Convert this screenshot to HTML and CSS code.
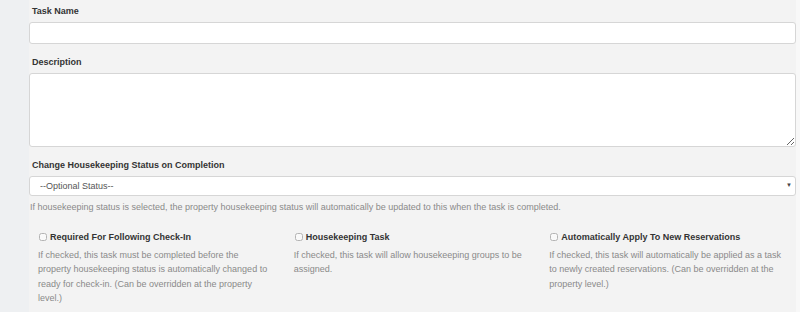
FILE: index.html
```html
<!DOCTYPE html>
<html lang="en">
<head>
    <meta charset="UTF-8">
    <meta name="viewport" content="width=device-width, initial-scale=1.0">
    <title>Edit Task</title>
    <link rel="stylesheet" href="styles.css">
</head>
<body>
    <div class="page">
        <div class="sidebar"></div>

        <form class="task-form" id="taskForm">
            <div class="form-group">
                <label for="taskName">Task Name</label>
                <input type="text" id="taskName">
            </div>

            <div class="form-group">
                <label for="description">Description</label>
                <textarea id="description"></textarea>
            </div>

            <div class="form-group">
                <label for="hkStatus">Change Housekeeping Status on Completion</label>
                <div class="select-wrap">
                    <select id="hkStatus">
                        <option value="">--Optional Status--</option>
                    </select>
                    <span class="caret">&#9660;</span>
                </div>
                <p class="help">If housekeeping status is selected, the property housekeeping status will automatically be updated to this when the task is completed.</p>
            </div>

            <div class="options">
                <div class="option">
                    <label class="check"><input type="checkbox"> Required For Following Check-In</label>
                    <p class="help">If checked, this task must be completed before the property housekeeping status is automatically changed to ready for check-in. (Can be overridden at the property level.)</p>
                </div>
                <div class="option">
                    <label class="check"><input type="checkbox"> Housekeeping Task</label>
                    <p class="help">If checked, this task will allow housekeeping groups to be assigned.</p>
                </div>
                <div class="option">
                    <label class="check"><input type="checkbox"> Automatically Apply To New Reservations</label>
                    <p class="help">If checked, this task will automatically be applied as a task to newly created reservations. (Can be overridden at the property level.)</p>
                </div>
            </div>
        </form>

        <div class="edge"></div>
    </div>
</body>
</html>
```

FILE: styles.css
```css
body {
    font-family: "Liberation Sans", Arial, sans-serif;
    margin: 0;
    padding: 0;
    background-color: #f3f3f3;
    color: #333;
    height: 312px;
    overflow: hidden;
}

.page {
    display: flex;
    height: 312px;
}

.sidebar {
    width: 29px;
    flex-shrink: 0;
    background-color: #eef0f2;
}

.edge {
    width: 4px;
    flex-shrink: 0;
    background-color: #f8f8f8;
}

.task-form {
    flex: 1;
    padding: 6px 0 0 0;
}

.form-group {
    margin-bottom: 13px;
}

label {
    display: block;
    font-size: 9px;
    font-weight: bold;
    margin: 0 0 6px 3px;
}

input[type="text"],
textarea,
select {
    display: block;
    width: 100%;
    box-sizing: border-box;
    border: 1px solid #d6d6d6;
    border-radius: 3px;
    background-color: white;
    font-family: inherit;
}

input[type="text"] {
    height: 22px;
}

textarea {
    height: 74px;
    resize: vertical;
}

.select-wrap {
    position: relative;
}

select {
    height: 20px;
    padding: 0 0 0 10px;
    font-size: 9px;
    color: #555;
    appearance: none;
    -webkit-appearance: none;
}

.caret {
    position: absolute;
    right: 4px;
    top: 6px;
    font-size: 6px;
    color: #444;
}

.help {
    font-size: 9px;
    color: #8a8a8a;
    line-height: 14.5px;
    margin: 4px 0 0 1px;
}

.options {
    display: grid;
    grid-template-columns: repeat(3, 1fr);
    margin-top: 17px;
}

.option {
    padding: 0 12px 0 9px;
}

.option:last-child {
    padding-right: 10px;
}

.check {
    display: flex;
    align-items: center;
    margin: 0 0 2px 0;
}

.check input {
    width: 8px;
    height: 8px;
    margin: 0 3px 0 1px;
    opacity: 0.5;
}

.option .help {
    margin-top: 6px;
    margin-left: 0;
}
```
